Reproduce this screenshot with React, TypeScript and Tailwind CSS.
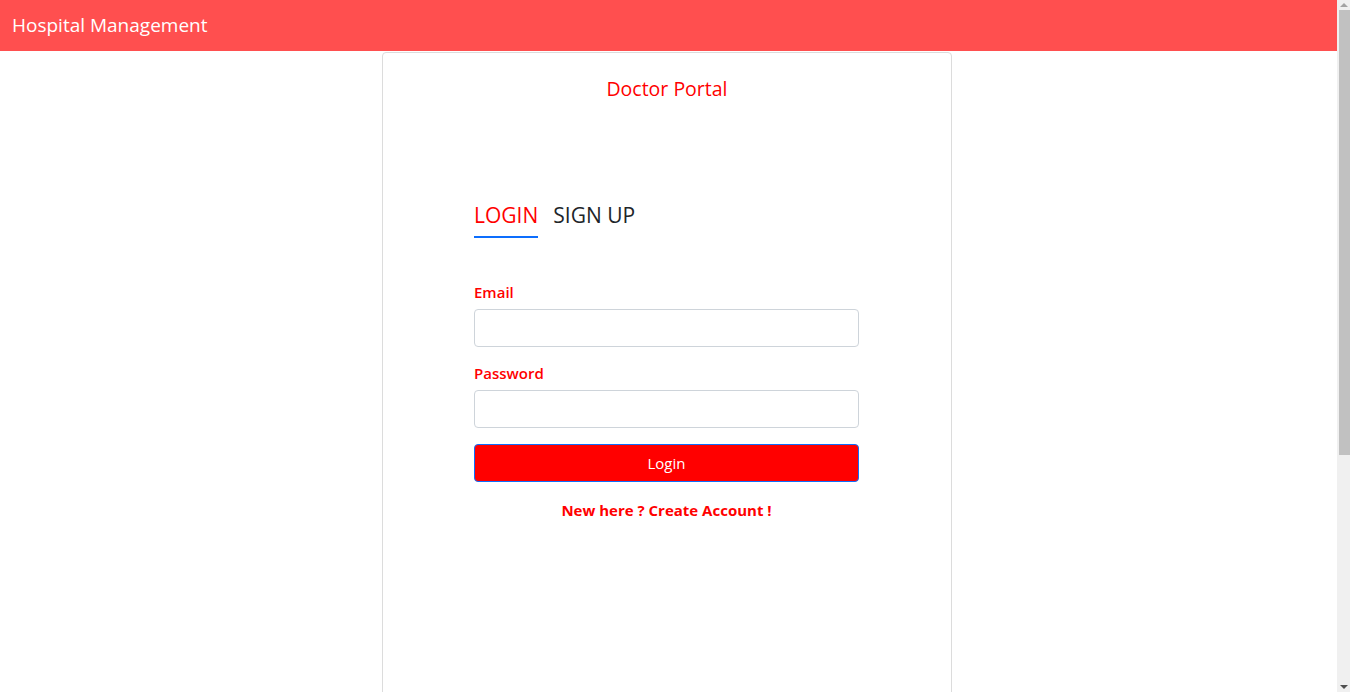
export default function App() {
  const font = { fontFamily: '"Segoe UI", "Open Sans", "Noto Sans", sans-serif' };
  return (
    <div className="min-h-[760px] bg-white" style={font}>
      <nav className="h-[51px] bg-[#ff4f4f] flex items-center px-3">
        <span className="text-white text-[19px]">Hospital Management</span>
      </nav>
      <div className="flex">
        <div className="ml-[382px] mt-px w-[570px] h-[720px] border border-[#dcdcdc] rounded-[4px] flex flex-col items-center">
          <h2 className="mt-[23px] text-[#ff0000] text-[19.5px] leading-[26px]">Doctor Portal</h2>
          <div className="mt-[98px] w-[385px] self-start ml-[91px]">
            <div className="flex gap-[15px] text-[21px] leading-[30px]">
              <div className="flex flex-col">
                <span className="text-[#ff0000]">LOGIN</span>
                <div className="mt-[6px] h-[2px] bg-[#0d6efd]" />
              </div>
              <span className="text-[#212529]">SIGN UP</span>
            </div>
            <form className="mt-[43px] flex flex-col">
              <label className="text-[#ff0000] text-[15px] font-semibold leading-[22px] mb-[6px]">Email</label>
              <input className="h-[38px] border border-[#ced4da] rounded-[4px] px-3 outline-none" />
              <label className="mt-[15px] text-[#ff0000] text-[15px] font-semibold leading-[22px] mb-[6px]">Password</label>
              <input type="password" className="h-[38px] border border-[#ced4da] rounded-[4px] px-3 outline-none" />
              <button type="button" className="mt-[16px] h-[38px] bg-[#ff0000] border border-[#0d6efd] rounded-[4px] text-white text-[15px]">Login</button>
              <p className="mt-[17px] text-center text-[#ff0000] text-[15px] font-bold">New here ? Create Account !</p>
            </form>
          </div>
        </div>
      </div>
      <div className="fixed top-0 right-0 w-[13px] h-[692px] bg-[#f0f0f0] flex flex-col items-center">
        <div className="h-[9px] w-full flex items-center justify-center">
          <div className="w-0 h-0 border-l-[4px] border-r-[4px] border-b-[4px] border-l-transparent border-r-transparent border-b-[#a3a3a3]" />
        </div>
        <div className="mt-px w-[11px] ml-[2px] h-[445px] bg-[#c1c1c1]" />
        <div className="flex-1" />
        <div className="h-[11px] w-full flex items-center justify-center">
          <div className="w-0 h-0 border-l-[4px] border-r-[4px] border-t-[4px] border-l-transparent border-r-transparent border-t-[#505050]" />
        </div>
      </div>
    </div>
  );
}
